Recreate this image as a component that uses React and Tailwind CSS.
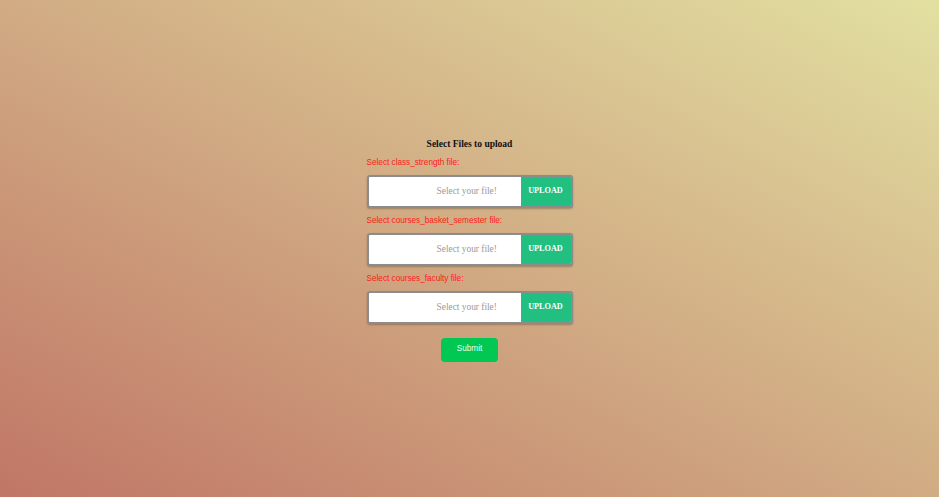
import { useState } from 'react'

const files = ['class_strength', 'courses_basket_semester', 'courses_faculty']

function FileRow({ name, first }) {
  const [file, setFile] = useState('')
  return (
    <div className="flex flex-col">
      <div className={`${first ? 'mt-[6px]' : 'mt-[7px]'} h-[12px] leading-[12px] text-[8.2px] text-[#ff1a1a] font-['Liberation_Sans',Arial,sans-serif]`}>
        Select {name} file:
      </div>
      <label className="mt-[6px] flex h-[33px] w-[206px] overflow-hidden rounded-[3px] border-2 border-[#8c8c8c] bg-white shadow-[0_1px_2px_rgba(0,0,0,0.25)] cursor-pointer">
        <input type="file" className="hidden" onChange={(e) => setFile(e.target.files?.[0]?.name || '')} />
        <div className="flex-1 flex items-center pl-[68px] text-[9.4px] text-[#9a9a9a] font-['Liberation_Serif','Times_New_Roman',serif] whitespace-nowrap overflow-hidden">
          {file || 'Select your file!'}
        </div>
        <div className="w-[50px] flex items-center justify-center bg-[#22c080] text-white text-[8.2px] font-bold font-['Liberation_Serif','Times_New_Roman',serif]">
          UPLOAD
        </div>
      </label>
    </div>
  )
}

export default function App() {
  return (
    <div className="min-h-screen w-full flex items-center justify-center bg-[linear-gradient(to_top_right,#c07666,#e2e0a1)]">
      <div className="flex flex-col items-center pt-[1px]">
        <h3 className="h-[14px] leading-[14px] text-[9.5px] font-bold text-[#111] font-['Liberation_Serif','Times_New_Roman',serif]">
          Select Files to upload
        </h3>
        <div className="flex flex-col">
          {files.map((f, i) => <FileRow key={f} name={f} first={i === 0} />)}
        </div>
        <button className="mt-[14px] h-[24px] w-[57px] rounded-[4px] bg-[#00c853] text-[8.2px] text-[#e8ffe8] font-['Liberation_Sans',Arial,sans-serif]">
          Submit
        </button>
      </div>
    </div>
  )
}
